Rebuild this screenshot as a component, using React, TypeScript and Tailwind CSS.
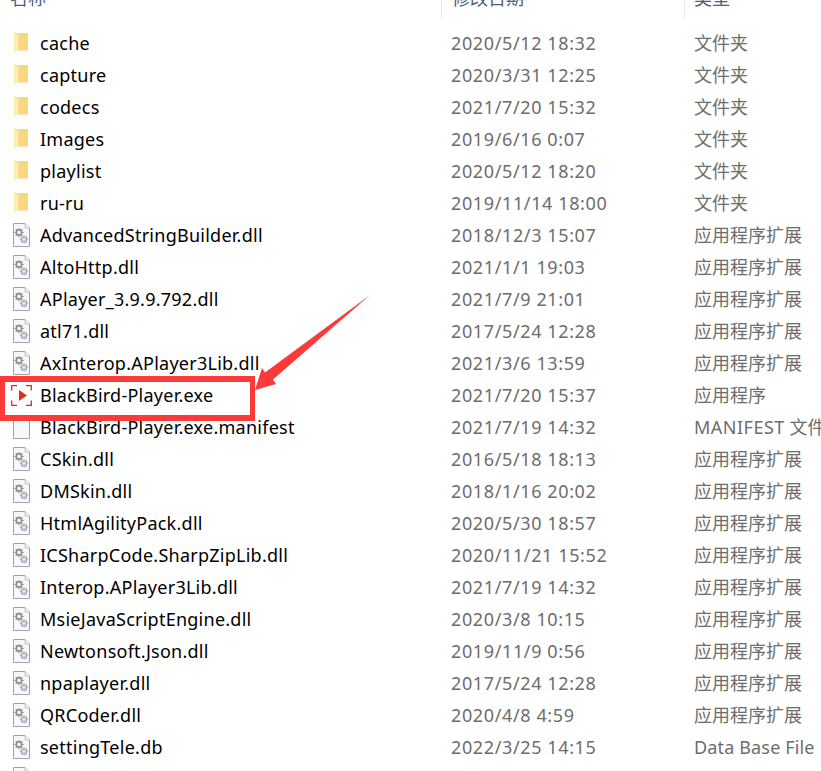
const rows: [string, string, string, string][] = [
  ["f", "cache", "2020/5/12 18:32", "文件夹"],
  ["f", "capture", "2020/3/31 12:25", "文件夹"],
  ["f", "codecs", "2021/7/20 15:32", "文件夹"],
  ["f", "Images", "2019/6/16 0:07", "文件夹"],
  ["f", "playlist", "2020/5/12 18:20", "文件夹"],
  ["f", "ru-ru", "2019/11/14 18:00", "文件夹"],
  ["d", "AdvancedStringBuilder.dll", "2018/12/3 15:07", "应用程序扩展"],
  ["d", "AltoHttp.dll", "2021/1/1 19:03", "应用程序扩展"],
  ["d", "APlayer_3.9.9.792.dll", "2021/7/9 21:01", "应用程序扩展"],
  ["d", "atl71.dll", "2017/5/24 12:28", "应用程序扩展"],
  ["d", "AxInterop.APlayer3Lib.dll", "2021/3/6 13:59", "应用程序扩展"],
  ["e", "BlackBird-Player.exe", "2021/7/20 15:37", "应用程序"],
  ["b", "BlackBird-Player.exe.manifest", "2021/7/19 14:32", "MANIFEST 文件"],
  ["d", "CSkin.dll", "2016/5/18 18:13", "应用程序扩展"],
  ["d", "DMSkin.dll", "2018/1/16 20:02", "应用程序扩展"],
  ["d", "HtmlAgilityPack.dll", "2020/5/30 18:57", "应用程序扩展"],
  ["d", "ICSharpCode.SharpZipLib.dll", "2020/11/21 15:52", "应用程序扩展"],
  ["d", "Interop.APlayer3Lib.dll", "2021/7/19 14:32", "应用程序扩展"],
  ["d", "MsieJavaScriptEngine.dll", "2020/3/8 10:15", "应用程序扩展"],
  ["d", "Newtonsoft.Json.dll", "2019/11/9 0:56", "应用程序扩展"],
  ["d", "npaplayer.dll", "2017/5/24 12:28", "应用程序扩展"],
  ["d", "QRCoder.dll", "2020/4/8 4:59", "应用程序扩展"],
  ["d", "settingTele.db", "2022/3/25 14:15", "Data Base File"],
  ["d", "", "", ""],
];

function Gear({ cx, cy, r, color }: { cx: number; cy: number; r: number; color: string }) {
  const teeth = [0, 45, 90, 135];
  return (
    <g stroke={color} fill="none">
      <circle cx={cx} cy={cy} r={r} strokeWidth="1.6" />
      {teeth.map((a) => (
        <path
          key={a}
          d={`M${cx} ${cy - r - 2} V${cy + r + 2}`}
          strokeWidth="1.3"
          strokeDasharray={`1.4 ${2 * r + 1.2}`}
          transform={`rotate(${a} ${cx} ${cy})`}
        />
      ))}
    </g>
  );
}

function Icon({ kind }: { kind: string }) {
  if (kind === "f")
    return (
      <svg width="14" height="20" viewBox="0 0 14 20" className="mr-[1px]">
        <path d="M0 0 H14 V17.5 H0 Z" fill="#f8d979" />
        <path d="M0 0 L4.5 1.2 V17.5 L0 20 Z" fill="#fdeeb4" />
      </svg>
    );
  if (kind === "e")
    return (
      <svg width="21" height="21" viewBox="0 0 21 21" fill="none">
        <path d="M0.7 5.5 V0.7 H6 M15 0.7 H20.3 V5.5 M0.7 15.5 V20.3 H6 M15 20.3 H20.3 V15.5" stroke="#d9301f" strokeWidth="1.3" />
        <path d="M8 5 L16 10.5 L8 16 Z" fill="#d9301f" />
      </svg>
    );
  return (
    <svg width="17" height="24" viewBox="0 0 17 24">
      <path d="M0.5 0.5 H12 L16.5 5 V23.5 H0.5 Z" fill="#f8f8f8" stroke="#a3a3a3" />
      <path d="M12 0.5 V5 H16.5" fill="#efefef" stroke="#c4c4c4" />
      {kind === "d" && (
        <>
          <Gear cx={6} cy={9.5} r={2.6} color="#8c8f93" />
          <Gear cx={11} cy={16.5} r={2.2} color="#9fb4c6" />
        </>
      )}
    </svg>
  );
}

function Type({ text }: { text: string }) {
  if (text.startsWith("MANIFEST"))
    return (
      <>
        <span className="tracking-[0.5px]">MANIFEST</span> 文件
      </>
    );
  if (text.startsWith("Data")) return <span className="tracking-[0.15px]">{text}</span>;
  return <>{text}</>;
}

export default function App() {
  return (
    <div className="relative h-[771px] w-[821px] overflow-hidden bg-white font-['Noto_Sans','Noto_Sans_CJK_SC',sans-serif] text-[18px]">
      <div className="flex h-[18px] text-[#4c607a]">
        <div className="w-[441px] pl-[10px]">
          <div className="-mt-[11px] leading-[18px]">名称</div>
        </div>
        <div className="w-[243px] border-l border-[#e5e5e5] pl-[10px]">
          <div className="-mt-[11px] leading-[18px]">修改日期</div>
        </div>
        <div className="flex-1 border-l border-[#e5e5e5] pl-[9px]">
          <div className="-mt-[11px] leading-[18px]">类型</div>
        </div>
      </div>
      <div className="mt-[9px]">
        {rows.map(([kind, name, date, type], i) => (
          <div key={i} className="flex h-[32px] items-center whitespace-nowrap">
            <div className="flex w-[40px] shrink-0 items-center justify-center pl-[3px]">
              <Icon kind={kind} />
            </div>
            <div className="w-[411px] shrink-0 tracking-[0.25px] text-black">{name}</div>
            <div className="w-[243px] shrink-0 tracking-[0.62px] text-[#6d6d6d]">{date}</div>
            <div className="shrink-0 text-[#6d6d6d]">
              <Type text={type} />
            </div>
          </div>
        ))}
      </div>
      <div className="absolute top-[376px] left-0 h-[45px] w-[255px] border-[5px] border-y-[6px] border-[#fc3a3a]" />
      <svg className="absolute top-0 left-0" width="821" height="771" viewBox="0 0 821 771">
        <path d="M370 295 L265 372.5 L262 368 L255 390 L276 384 L273 379.5 Z" fill="#fc3a3a" />
      </svg>
    </div>
  );
}
